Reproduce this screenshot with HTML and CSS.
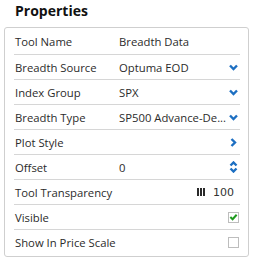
FILE: index.html
```html
<!DOCTYPE html>
<html>
<head>
<meta charset="utf-8">
<link rel="stylesheet" href="styles.css">
</head>
<body>
<h1 class="title">Properties</h1>
<div class="panel">
  <div class="row"><span class="label">Tool Name</span><span class="value">Breadth Data</span><span class="icon"></span></div>
  <div class="row"><span class="label">Breadth Source</span><span class="value">Optuma EOD</span><span class="icon"><svg width="9" height="7" viewBox="0 0 9 7"><polyline points="1,1.5 4.5,5 8,1.5" class="chev"/></svg></span></div>
  <div class="row"><span class="label">Index Group</span><span class="value">SPX</span><span class="icon"><svg width="9" height="7" viewBox="0 0 9 7"><polyline points="1,1.5 4.5,5 8,1.5" class="chev"/></svg></span></div>
  <div class="row"><span class="label">Breadth Type</span><span class="value">SP500 Advance-De...</span><span class="icon"><svg width="9" height="7" viewBox="0 0 9 7"><polyline points="1,1.5 4.5,5 8,1.5" class="chev"/></svg></span></div>
  <div class="row"><span class="label">Plot Style</span><span class="value"></span><span class="icon"><svg width="9" height="9" viewBox="0 0 9 9"><polyline points="2.5,1 6,4.5 2.5,8" class="chev"/></svg></span></div>
  <div class="row"><span class="label">Offset</span><span class="value">0</span><span class="icon"><svg width="9" height="12" viewBox="0 0 9 12"><polyline points="1.5,4.5 4.5,1.5 7.5,4.5" class="chev"/><polyline points="1.5,7.5 4.5,10.5 7.5,7.5" class="chev"/></svg></span></div>
  <div class="row"><span class="label wide">Tool Transparency</span><span class="trans"><span class="bars"><i></i><i></i><i></i></span><span class="num">100</span></span></div>
  <div class="row"><span class="label">Visible</span><span class="value"></span><span class="icon"><span class="box"><svg width="10" height="10" viewBox="0 0 10 10"><polyline points="1.5,5 4,7.5 8.5,2.5" class="check"/></svg></span></span></div>
  <div class="row"><span class="label wide">Show In Price Scale</span><span class="value"></span><span class="icon"><span class="box"></span></span></div>
</div>
</body>
</html>
```
FILE: styles.css
```css
html, body {
  margin: 0;
  padding: 0;
  background: #fff;
}
body {
  font-family: "Open Sans", "DejaVu Sans", sans-serif;
  font-size: 11.3px;
  color: #2b2b2b;
  width: 253px;
}
.title {
  margin: 0;
  padding: 0 0 0 15px;
  height: 27px;
  line-height: 22px;
  font-size: 14px;
  font-weight: 700;
  color: #111;
}
.panel {
  margin: 0 4px;
  border: 1px solid #cfcfcf;
  border-radius: 3px;
  padding: 1px 8px 2px 9px;
}
.row {
  display: grid;
  grid-template-columns: 104px 1fr 14px;
  align-items: center;
  height: 24px;
  padding-left: 1px;
}
.row + .row {
  border-top: 1px solid #d6d6d6;
}
.row:first-child {
  height: 25px;
}
.label {
  white-space: nowrap;
}
.value {
  white-space: nowrap;
}
.icon {
  display: flex;
  justify-content: center;
  align-items: center;
}
.chev {
  fill: none;
  stroke: #1d6fc2;
  stroke-width: 2.4;
}
.trans {
  grid-column: 2 / 4;
  display: flex;
  justify-content: flex-end;
  align-items: center;
  gap: 8px;
  padding-right: 6px;
}
.bars {
  display: flex;
  gap: 1px;
  height: 8px;
}
.bars i {
  display: block;
  width: 2px;
  height: 8px;
  background: #2a2a2a;
}
.num {
  font-family: "DejaVu Sans", sans-serif;
  font-size: 11px;
  color: #333;
}
.box {
  display: flex;
  align-items: center;
  justify-content: center;
  width: 9px;
  height: 9px;
  border: 1px solid #bdbdbd;
  background: #fff;
}
.check {
  fill: none;
  stroke: #1e9a1e;
  stroke-width: 2.2;
}
```
